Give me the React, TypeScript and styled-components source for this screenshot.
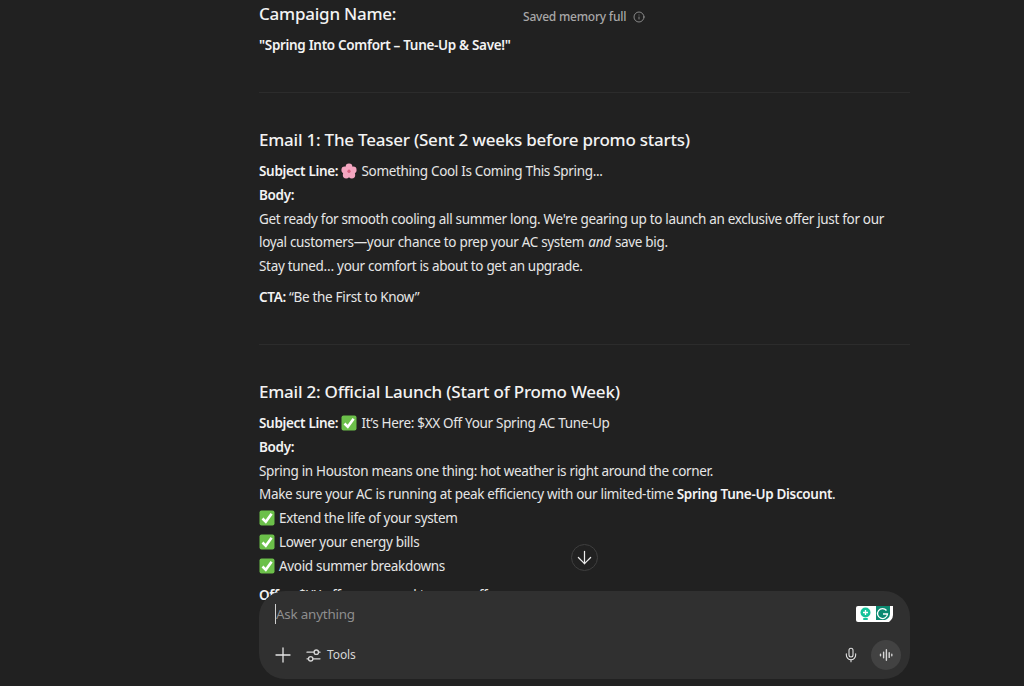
import styled, { createGlobalStyle } from "styled-components";
import { ArrowDown, Info, Mic, Plus } from "lucide-react";

const GlobalStyle = createGlobalStyle`
  html, body {
    margin: 0;
    height: 100%;
    background: #212121;
  }
  body {
    font-family: "Noto Sans", "Liberation Sans", sans-serif;
    color: #e6e6e6;
    overflow: hidden;
  }
`;

const Page = styled.div`
  position: relative;
  width: 1024px;
  height: 686px;
  overflow: hidden;
  background: #212121;
`;

const Thread = styled.main`
  width: 651px;
  margin-left: 259px;
  padding-top: 2px;
  font-size: 13.5px;
  line-height: 23.8px;
  letter-spacing: -0.32px;
`;

const Heading = styled.h3`
  margin: 0 0 8.1px;
  font-size: 17px;
  line-height: 24px;
  font-weight: 500;
  letter-spacing: -0.23px;
  color: #f3f3f3;
`;

const Para = styled.p`
  margin: 0 0 7px;
  strong {
    font-weight: 600;
    color: #f3f3f3;
  }
  em {
    margin: 0 1px;
  }
`;

const OfferPara = styled(Para)`
  margin-top: -2px;
`;

const Rule = styled.hr`
  border: 0;
  border-top: 1px solid #2c2c2c;
  margin: 34.1px 0 35px;
`;

const Emoji = styled.svg`
  width: 16px;
  height: 16px;
  vertical-align: -3px;
  margin-right: 4px;
`;

const MemoryNote = styled.div`
  position: absolute;
  top: 9px;
  left: 523px;
  display: flex;
  align-items: center;
  gap: 7px;
  font-size: 12px;
  line-height: 16px;
  font-weight: 500;
  letter-spacing: -0.22px;
  color: #a8a8a8;
`;

const ScrollButton = styled.button`
  position: absolute;
  left: 571px;
  top: 544px;
  width: 27px;
  height: 27px;
  padding: 0;
  display: flex;
  align-items: center;
  justify-content: center;
  border-radius: 50%;
  border: 1px solid #3f3f3f;
  background: #212121;
  color: #ececec;
`;

const Composer = styled.div`
  position: absolute;
  left: 259px;
  top: 591px;
  width: 651px;
  height: 88px;
  box-sizing: border-box;
  padding: 13px 9px 9px 16px;
  border-radius: 26px;
  background: #303030;
  display: flex;
  flex-direction: column;
  justify-content: space-between;
`;

const InputRow = styled.div`
  display: flex;
  align-items: center;
  justify-content: space-between;
  padding-right: 8px;
  height: 20px;
`;

const Placeholder = styled.div`
  border-left: 1px solid #d0d0d0;
  font-size: 13.4px;
  line-height: 20px;
  letter-spacing: -0.2px;
  color: #8e8e8e;
`;

const ToolRow = styled.div`
  display: flex;
  align-items: center;
`;

const ToolLabel = styled.span`
  margin-left: 6px;
  margin-bottom: 2px;
  font-size: 12px;
  letter-spacing: -0.1px;
  color: #d6d6d6;
`;

const ToolIcon = styled.span`
  display: flex;
  margin-left: 11px;
  color: #d6d6d6;
`;

const PlusIcon = styled.span`
  display: flex;
  margin-left: -4px;
  color: #e4e4e4;
`;

const Spacer = styled.div`
  flex: 1;
`;

const MicIcon = styled.span`
  display: flex;
  margin-right: 12px;
  color: #e4e4e4;
`;

const VoiceButton = styled.div`
  width: 30px;
  height: 30px;
  border-radius: 50%;
  background: #424242;
  display: flex;
  align-items: center;
  justify-content: center;
  color: #d6d6d6;
`;

const Flower = () => (
  <Emoji viewBox="0 0 16 16">
    <g fill="#f4a6c0">
      <circle cx="8" cy="3.8" r="3.4" />
      <circle cx="3.8" cy="7" r="3.4" />
      <circle cx="12.2" cy="7" r="3.4" />
      <circle cx="5.2" cy="12" r="3.4" />
      <circle cx="10.8" cy="12" r="3.4" />
    </g>
    <circle cx="8" cy="8.2" r="1.6" fill="#d9607f" />
  </Emoji>
);

const Check = () => (
  <Emoji viewBox="0 0 16 16">
    <rect x="0.5" y="0.5" width="15" height="15" rx="2" fill="#6cc04a" />
    <path d="M3.5 8.5 L6.8 11.8 L12.6 3.8" fill="none" stroke="#fff" strokeWidth="2.6" />
  </Emoji>
);

const GrammarlyBadge = () => (
  <svg width="37" height="16" viewBox="0 0 37 16">
    <path d="M2 0H37V9Q37 12 35 14L33 16H2Q0 16 0 14V2Q0 0 2 0Z" fill="#fff" />
    <circle cx="9.5" cy="6.5" r="5" fill="#15c39a" />
    <rect x="7" y="12" width="5" height="2" rx="1" fill="#15c39a" />
    <path d="M9.5 4V9M7 6.5H12" stroke="#fff" strokeWidth="1.3" />
    <path d="M20 0H34V8Q34 11 31 13L29 14H20Z" fill="#0c8a71" />
    <path d="M30.5 4.5A5 5 0 1 0 31.5 8H27" fill="none" stroke="#fff" strokeWidth="1.3" />
  </svg>
);

const ToolsGlyph = () => (
  <svg width="15" height="15" viewBox="0 0 15 15" fill="none" stroke="currentColor" strokeWidth="1.3" strokeLinecap="round">
    <path d="M1 4.2H8M12.6 4.2H14M1 10.8H2.4M7 10.8H14" />
    <circle cx="10.3" cy="4.2" r="2.2" />
    <circle cx="4.7" cy="10.8" r="2.2" />
  </svg>
);

const VoiceBars = () => (
  <svg width="16" height="16" viewBox="0 0 16 16" stroke="currentColor" strokeWidth="1.4" strokeLinecap="round">
    <path d="M2.5 7.2V8.8M5.6 5.2V10.8M8.4 2.8V13.2M11.2 5.6V10.4M13.8 7.2V8.8" />
  </svg>
);

const App = () => {
  return (
    <Page>
      <GlobalStyle />
      <Thread>
        <Heading>Campaign Name:</Heading>
        <Para>
          <strong>"Spring Into Comfort – Tune-Up &amp; Save!"</strong>
        </Para>
        <Rule />
        <Heading>Email 1: The Teaser (Sent 2 weeks before promo starts)</Heading>
        <Para>
          <strong>Subject Line:</strong> <Flower />Something Cool Is Coming This Spring...
          <br />
          <strong>Body:</strong>
          <br />
          Get ready for smooth cooling all summer long. We're gearing up to launch an exclusive offer just for our
          loyal customers—your chance to prep your AC system <em>and</em> save big.
          <br />
          Stay tuned… your comfort is about to get an upgrade.
        </Para>
        <Para>
          <strong>CTA:</strong> “Be the First to Know”
        </Para>
        <Rule />
        <Heading>Email 2: Official Launch (Start of Promo Week)</Heading>
        <Para>
          <strong>Subject Line:</strong> <Check />It’s Here: $XX Off Your Spring AC Tune-Up
          <br />
          <strong>Body:</strong>
          <br />
          Spring in Houston means one thing: hot weather is right around the corner.
          <br />
          Make sure your AC is running at peak efficiency with our limited-time <strong>Spring Tune-Up Discount</strong>.
          <br />
          <Check />Extend the life of your system
          <br />
          <Check />Lower your energy bills
          <br />
          <Check />Avoid summer breakdowns
        </Para>
        <OfferPara>
          <strong>Offer:</strong> $XX off your annual tune-up offer
        </OfferPara>
      </Thread>

      <MemoryNote>
        Saved memory full
        <Info size={12} strokeWidth={1.5} />
      </MemoryNote>

      <ScrollButton>
        <ArrowDown size={21} strokeWidth={1.4} />
      </ScrollButton>

      <Composer>
        <InputRow>
          <Placeholder>Ask anything</Placeholder>
          <GrammarlyBadge />
        </InputRow>
        <ToolRow>
          <PlusIcon>
            <Plus size={24} strokeWidth={1.3} />
          </PlusIcon>
          <ToolIcon>
            <ToolsGlyph />
          </ToolIcon>
          <ToolLabel>Tools</ToolLabel>
          <Spacer />
          <MicIcon>
            <Mic size={16} strokeWidth={1.6} />
          </MicIcon>
          <VoiceButton>
            <VoiceBars />
          </VoiceButton>
        </ToolRow>
      </Composer>
    </Page>
  );
};

export default App;
